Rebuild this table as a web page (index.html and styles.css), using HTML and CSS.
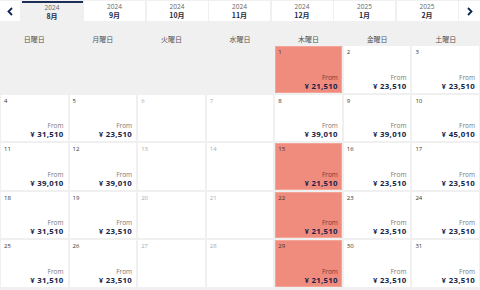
FILE: index.html
```html
<!DOCTYPE html>
<html lang="ja">
<head>
<meta charset="utf-8">
<title>Calendar</title>
<link rel="stylesheet" href="styles.css">
</head>
<body>
<div class="topbar">
  <div class="arrow"><svg width="6" height="9" viewBox="0 0 6 9"><polyline points="5,1 1.5,4.5 5,8" fill="none" stroke="#0d2451" stroke-width="1.8"/></svg></div>
  <div class="tab active"><span class="yr">2024</span><span class="mo">8月</span></div>
  <div class="tab"><span class="yr">2024</span><span class="mo">9月</span></div>
  <div class="tab"><span class="yr">2024</span><span class="mo">10月</span></div>
  <div class="tab"><span class="yr">2024</span><span class="mo">11月</span></div>
  <div class="tab"><span class="yr">2024</span><span class="mo">12月</span></div>
  <div class="tab"><span class="yr">2025</span><span class="mo">1月</span></div>
  <div class="tab"><span class="yr">2025</span><span class="mo">2月</span></div>
  <div class="arrow"><svg width="6" height="9" viewBox="0 0 6 9"><polyline points="1,1 4.5,4.5 1,8" fill="none" stroke="#0d2451" stroke-width="1.8"/></svg></div>
</div>
<div class="weekdays">
  <div>日曜日</div><div>月曜日</div><div>火曜日</div><div>水曜日</div><div>木曜日</div><div>金曜日</div><div>土曜日</div>
</div>
<div class="grid">
  <div class="cell hot c5"><span class="d">1</span><span class="from">From</span><span class="price">¥ 21,510</span></div>
  <div class="cell"><span class="d">2</span><span class="from">From</span><span class="price">¥ 23,510</span></div>
  <div class="cell"><span class="d">3</span><span class="from">From</span><span class="price">¥ 23,510</span></div>

  <div class="cell"><span class="d">4</span><span class="from">From</span><span class="price">¥ 31,510</span></div>
  <div class="cell"><span class="d">5</span><span class="from">From</span><span class="price">¥ 23,510</span></div>
  <div class="cell past"><span class="d">6</span></div>
  <div class="cell past"><span class="d">7</span></div>
  <div class="cell"><span class="d">8</span><span class="from">From</span><span class="price">¥ 39,010</span></div>
  <div class="cell"><span class="d">9</span><span class="from">From</span><span class="price">¥ 39,010</span></div>
  <div class="cell"><span class="d">10</span><span class="from">From</span><span class="price">¥ 45,010</span></div>

  <div class="cell"><span class="d">11</span><span class="from">From</span><span class="price">¥ 39,010</span></div>
  <div class="cell"><span class="d">12</span><span class="from">From</span><span class="price">¥ 39,010</span></div>
  <div class="cell past"><span class="d">13</span></div>
  <div class="cell past"><span class="d">14</span></div>
  <div class="cell hot"><span class="d">15</span><span class="from">From</span><span class="price">¥ 21,510</span></div>
  <div class="cell"><span class="d">16</span><span class="from">From</span><span class="price">¥ 23,510</span></div>
  <div class="cell"><span class="d">17</span><span class="from">From</span><span class="price">¥ 23,510</span></div>

  <div class="cell"><span class="d">18</span><span class="from">From</span><span class="price">¥ 31,510</span></div>
  <div class="cell"><span class="d">19</span><span class="from">From</span><span class="price">¥ 23,510</span></div>
  <div class="cell past"><span class="d">20</span></div>
  <div class="cell past"><span class="d">21</span></div>
  <div class="cell hot"><span class="d">22</span><span class="from">From</span><span class="price">¥ 21,510</span></div>
  <div class="cell"><span class="d">23</span><span class="from">From</span><span class="price">¥ 23,510</span></div>
  <div class="cell"><span class="d">24</span><span class="from">From</span><span class="price">¥ 23,510</span></div>

  <div class="cell"><span class="d">25</span><span class="from">From</span><span class="price">¥ 31,510</span></div>
  <div class="cell"><span class="d">26</span><span class="from">From</span><span class="price">¥ 23,510</span></div>
  <div class="cell past"><span class="d">27</span></div>
  <div class="cell past"><span class="d">28</span></div>
  <div class="cell hot"><span class="d">29</span><span class="from">From</span><span class="price">¥ 21,510</span></div>
  <div class="cell"><span class="d">30</span><span class="from">From</span><span class="price">¥ 23,510</span></div>
  <div class="cell"><span class="d">31</span><span class="from">From</span><span class="price">¥ 23,510</span></div>
</div>
</body>
</html>
```

FILE: styles.css
```css
* { box-sizing: border-box; }
html, body { margin: 0; padding: 0; }
body {
  width: 480px;
  height: 290px;
  overflow: hidden;
  background: #f0f0f0;
  font-family: "Open Sans", "Noto Sans CJK JP", sans-serif;
  color: #333;
}
.topbar {
  display: flex;
  gap: 1.5px;
  height: 21px;
  padding-top: 1px;
}
.arrow {
  width: 20px;
  flex: none;
  background: #fff;
  display: flex;
  align-items: center;
  justify-content: center;
}
.arrow:last-child { width: 21px; }
.tab {
  flex: 1;
  background: #fff;
  display: flex;
  flex-direction: column;
  align-items: center;
  justify-content: center;
  line-height: 8px;
}
.tab.active {
  background: #f0f0f0;
  border-top: 2px solid #1d2f57;
}
.yr { font-size: 6.5px; color: #666; }
.mo { font-size: 7px; font-weight: 700; color: #1e2a40; font-family: "Noto Sans CJK JP", sans-serif; }
.weekdays {
  display: grid;
  grid-template-columns: repeat(7, 1fr);
  gap: 2px;
  padding: 0 1px 2px;
  height: 25px;
  align-items: end;
}
.weekdays div {
  text-align: center;
  font-size: 7px;
  color: #555;
  font-family: "Noto Sans CJK JP", sans-serif;
}
.grid {
  display: grid;
  grid-template-columns: repeat(7, 1fr);
  grid-auto-rows: 46.5px;
  gap: 2px;
  padding: 0 1px;
}
.cell {
  background: #fff;
  display: flex;
  flex-direction: column;
  align-items: flex-end;
  padding: 2px 4px 1px 3px;
}
.c5 { grid-column-start: 5; }
.cell.hot { background: #f08c7d; border: 1px solid #f3a598; padding: 1px 3px 0 2px; }
.d {
  align-self: flex-start;
  font-size: 6px;
  line-height: 9px;
  color: #333;
  flex: 1;
}
.past .d { color: #aaa; }
.from {
  font-size: 6.5px;
  line-height: 6px;
  color: #777;
}
.hot .from { color: #6d3b35; }
.price {
  font-size: 7.8px;
  font-weight: 700;
  line-height: 11px;
  color: #15244a;
  letter-spacing: 0.3px;
}
```
